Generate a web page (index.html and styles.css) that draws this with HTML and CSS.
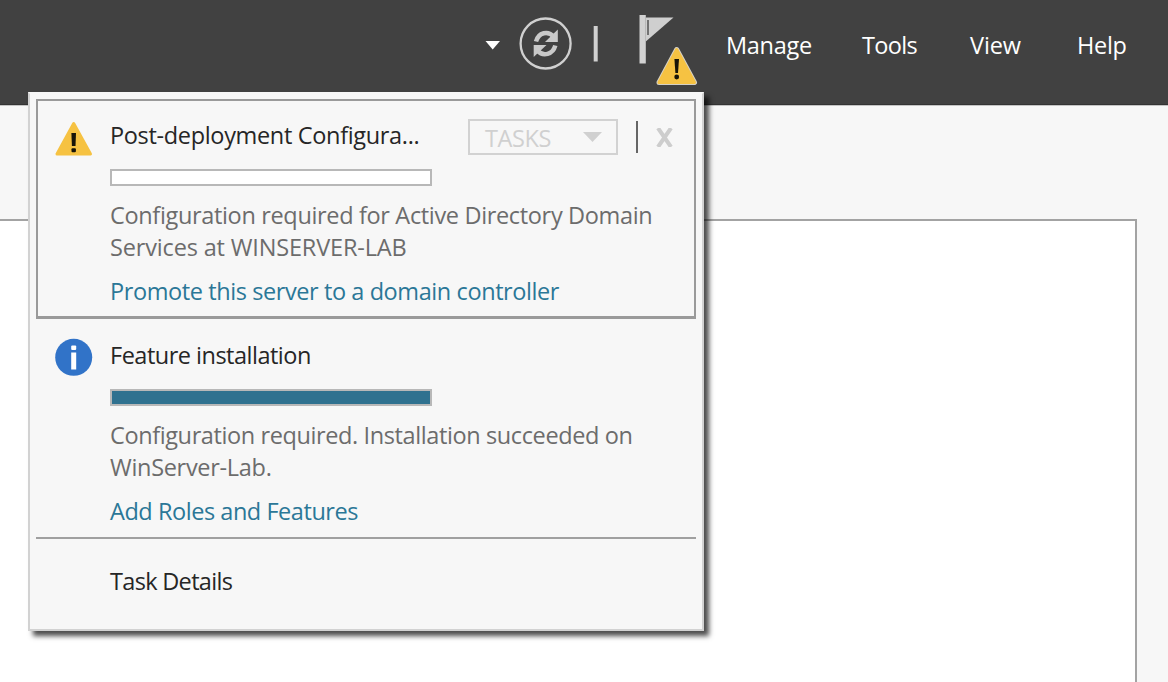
FILE: index.html
```html
<!DOCTYPE html>
<html lang="en">
<head>
<meta charset="utf-8">
<title>Server Manager</title>
<link rel="stylesheet" href="styles.css">
</head>
<body>
<div class="app">
  <header class="topbar">
    <svg class="tools" width="230" height="105" viewBox="480 0 230 105">
      <path d="M485.500 41H500L492.700 49.500Z" fill="#fff"/>
      <circle cx="545.600" cy="43.500" r="25" fill="none" stroke="#d0d0d0" stroke-width="2.300"/>
      <g fill="none" stroke="#c9c9c9" stroke-width="4.500">
        <path d="M536 41.500C538.500 32.500 548 30 554 37"/>
        <path d="M555.300 45.500C553 54.500 543 57 537.500 50.500"/>
      </g>
      <path d="M557.800 29.500V42H545Z" fill="#c9c9c9"/>
      <path d="M533.700 57V45H546.500Z" fill="#c9c9c9"/>
      <rect x="593.700" y="26" width="4" height="35.500" fill="#d0d0d0"/>
      <rect x="639.500" y="15" width="6.300" height="48.500" fill="#d2d2d2"/>
      <path d="M645.800 17.500H673.500L645.800 41.500Z" fill="#cfcfcf"/>
      <path d="M648 20V35" stroke="#555" stroke-width="1.500"/>
      <path d="M676.700 49.500L694.500 82.500H659Z" fill="#f6c242" stroke="#d5d1c6" stroke-width="5" stroke-linejoin="round"/>
      <path d="M676.700 49.500L694.500 82.500H659Z" fill="#f6c242" stroke="#f6c242" stroke-width="3" stroke-linejoin="round"/>
      <path d="M674.400 59H679L678 73H675.400Z" fill="#171408"/>
      <circle cx="676.700" cy="77" r="2.400" fill="#171408"/>
    </svg>
    <nav class="menu">
      <span class="m1">Manage</span><span class="m2">Tools</span><span class="m3">View</span><span class="m4">Help</span>
    </nav>
  </header>
  <main class="page"><div class="content"></div></main>
  <section class="flyout">
    <article class="task selected">
      <svg class="icon" width="38" height="36" viewBox="0 0 38 36">
        <path d="M18.700 2.500L35.500 33H2Z" fill="#f6c242" stroke="#f6c242" stroke-width="3" stroke-linejoin="round"/>
        <path d="M16.400 12H21L20.500 25H16.900Z" fill="#171408"/>
        <rect x="16.500" y="27.300" width="4.400" height="4" rx="1" fill="#171408"/>
      </svg>
      <div class="body">
        <div class="head">
          <h2><span class="t1">Post-deployment Configura...</span></h2>
          <div class="actions">
            <div class="tasks"><span class="t2">TASKS</span><svg width="19" height="10"><path d="M0 0H19L9.500 10Z" fill="#d0d0d0"/></svg></div>
            <i class="bar"></i>
            <svg class="close" width="17" height="19" viewBox="0 0 17 19"><path d="M2 0L15 19M15 0L2 19" stroke="#cdcdcd" stroke-width="4"/></svg>
          </div>
        </div>
        <div class="progress"></div>
        <p><span class="t3">Configuration required for Active Directory Domain</span><br><span class="t4">Services at WINSERVER-LAB</span></p>
        <a><span class="t5">Promote this server to a domain controller</span></a>
      </div>
    </article>
    <article class="task info">
      <svg class="icon" width="38" height="38" viewBox="0 0 38 38">
        <circle cx="18.700" cy="18.300" r="18.500" fill="#3173c8"/>
        <rect x="16.200" y="6.500" width="5" height="4.500" rx="1" fill="#fff"/>
        <rect x="16.200" y="13.500" width="5" height="17" fill="#fff"/>
      </svg>
      <div class="body">
        <div class="head"><h2><span class="t6">Feature installation</span></h2></div>
        <div class="progress full"></div>
        <p><span class="t7">Configuration required. Installation succeeded on</span><br><span class="t8">WinServer-Lab.</span></p>
        <a><span class="t9">Add Roles and Features</span></a>
      </div>
    </article>
    <footer><span class="t10">Task Details</span></footer>
  </section>
</div>
</body>
</html>
```
FILE: styles.css
```css
* { box-sizing: border-box; }
body { margin: 0; font-family: "Open Sans", "Noto Sans", sans-serif; font-size: 23.5px; }
.app { position: relative; width: 1168px; height: 682px; overflow: hidden; display: flex; flex-direction: column; background: #f7f7f7; }
.topbar { height: 105px; flex: none; display: flex; background: #414141; border-bottom: 1px solid #343434; padding-left: 480px; }
.tools { flex: none; }
.menu { display: flex; color: #fff; line-height: 32px; padding: 29px 0 0 16px; white-space: nowrap; }
.m1 { width: 136px; letter-spacing: -0.3px; }
.m2 { width: 108px; letter-spacing: -0.65px; }
.m3 { width: 107px; letter-spacing: -0.1px; }
.m4 { letter-spacing: -0.3px; }
.page { flex: 1; padding: 113px 31px 0 0; border-top: 1px solid #c4c4c4; display: flex; }
.content { flex: 1; background: #fff; border: 2px solid #a3a3a3; border-width: 2px 2px 0 0; }
.flyout { position: absolute; left: 28px; top: 92px; width: 676px; height: 539px; background: #f7f7f7; border: 2px solid #d2d2d2; border-top-color: #f7f7f7; padding: 5px 6px; box-shadow: 5px 5px 5px rgba(0,0,0,.7); }
.task { height: 220px; display: flex; gap: 17px; padding: 20px 17px 0 19px; border-bottom: 2px solid #a0a0a0; }
.selected { border: 2px solid #9a9a9a; border-bottom-width: 3px; padding: 20px 15px 0 17px; }
.icon { flex: none; overflow: visible; }
.body { flex: 1; }
.head { display: flex; height: 46px; margin-top: -2px; }
.info .head { margin-top: 0; }
h2 { margin: 0; font-weight: 400; font-size: inherit; line-height: 32px; color: #262626; width: 358px; flex: none; white-space: nowrap; }
.actions { display: flex; align-items: center; height: 36px; }
.tasks { width: 150px; height: 36px; border: 2px solid #d2d2d2; display: flex; align-items: center; justify-content: space-between; padding: 0 14px 0 15px; color: #d0d0d0; }
.tasks span { padding-top: 2px; }
.bar { width: 2px; height: 32px; background: #666; margin: 0 19px 0 18px; }
.close { margin-left: -1px; }
.progress { width: 322px; height: 17px; border: 2px solid #b8b8b8; background: #fff; margin: 4px 0 13px; }
.full { background: #2f718f; }
p { margin: 0; line-height: 32px; color: #6c6c6c; white-space: nowrap; }
a { display: block; margin-top: 12px; line-height: 32px; color: #2b7797; white-space: nowrap; }
footer { padding: 26px 0 0 74px; line-height: 32px; color: #262626; }
.t1 { letter-spacing: -0.33px; }
.t2 { letter-spacing: -0.4px; }
.t3 { letter-spacing: -0.34px; }
.t4 { letter-spacing: -0.16px; }
.t5 { letter-spacing: -0.41px; }
.t6 { letter-spacing: -0.5px; }
.t7 { letter-spacing: -0.39px; }
.t8 { letter-spacing: -0.3px; }
.t9 { letter-spacing: -0.45px; }
.t10 { letter-spacing: -0.68px; }
```
